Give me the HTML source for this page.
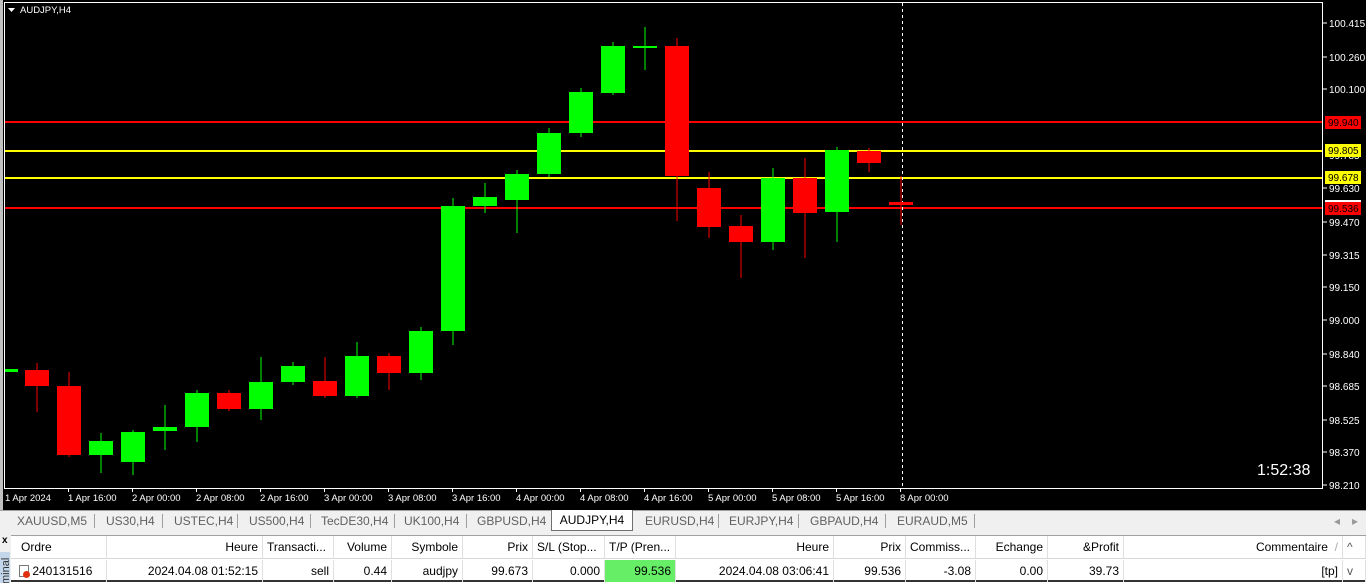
<!DOCTYPE html>
<html><head><meta charset="utf-8"><style>
*{margin:0;padding:0;box-sizing:border-box}
body{width:1366px;height:583px;overflow:hidden;background:#f0f0f0;font-family:"Liberation Sans",sans-serif;position:relative}
#chart{position:absolute;left:0;top:0}
.tabs{position:absolute;left:0;top:510px;width:1366px;height:21px;background:#f0f0f0;border-top:1px solid #a0a0a0;font-size:12px;color:#606060}
.tab{position:absolute;top:3px;}
.sep{position:absolute;top:3px;width:1px;height:14px;background:#a0a0a0}
.act{position:absolute;left:551px;top:-1px;width:82px;height:21px;background:#fff;border:1px solid #707070;border-top:none;color:#000;text-align:center;padding-top:3px}
.tbl{position:absolute;left:11px;top:535px;width:1355px;height:48px;background:#fff;border-top:1px solid #a0a0a0;font-size:12px}
.c{position:absolute;height:22px;line-height:22px;border-right:1px solid #e0e0e0;padding:0 4px;white-space:nowrap;overflow:hidden}
.r{text-align:right}
</style></head><body>
<svg id="chart" width="1366" height="510" xmlns="http://www.w3.org/2000/svg" font-family="Liberation Sans, sans-serif">
<rect x="0" y="0" width="1366" height="510" fill="#000"/>
<rect x="0" y="0" width="3" height="510" fill="#c0c0c0"/>
<rect x="4.5" y="2.5" width="1318" height="486" fill="none" stroke="#fff" stroke-width="1"/>
<polygon points="8,8 15,8 11.5,12" fill="#fff"/>
<text x="20" y="13" fill="#fff" font-size="9.5">AUDJPY,H4</text>
<g stroke-width="1">
<line x1="5" y1="122" x2="1322" y2="122" stroke="#f00" stroke-width="2"/>
<line x1="5" y1="151" x2="1322" y2="151" stroke="#ff0" stroke-width="2"/>
<line x1="5" y1="178" x2="1322" y2="178" stroke="#ff0" stroke-width="2"/>
<line x1="5" y1="208" x2="1322" y2="208" stroke="#f00" stroke-width="2"/>
</g>
<line x1="902.5" y1="3" x2="902.5" y2="488" stroke="#fff" stroke-dasharray="3,3"/>
<g stroke-width="1">
<line x1="37" y1="363" x2="37" y2="412" stroke="#f00"/><rect x="25" y="370" width="24" height="16" fill="#f00"/>
<line x1="69" y1="372" x2="69" y2="457" stroke="#f00"/><rect x="57" y="386" width="24" height="69" fill="#f00"/>
<line x1="101" y1="433" x2="101" y2="473" stroke="#0f0"/><rect x="89" y="441" width="24" height="14" fill="#0f0"/>
<line x1="133" y1="430" x2="133" y2="475" stroke="#0f0"/><rect x="121" y="432" width="24" height="30" fill="#0f0"/>
<line x1="165" y1="405" x2="165" y2="450" stroke="#0f0"/><rect x="153" y="427" width="24" height="4" fill="#0f0"/>
<line x1="197" y1="390" x2="197" y2="442" stroke="#0f0"/><rect x="185" y="393" width="24" height="34" fill="#0f0"/>
<line x1="229" y1="390" x2="229" y2="411" stroke="#f00"/><rect x="217" y="393" width="24" height="16" fill="#f00"/>
<line x1="261" y1="357" x2="261" y2="420" stroke="#0f0"/><rect x="249" y="382" width="24" height="27" fill="#0f0"/>
<line x1="293" y1="362" x2="293" y2="385" stroke="#0f0"/><rect x="281" y="366" width="24" height="16" fill="#0f0"/>
<line x1="325" y1="357" x2="325" y2="398" stroke="#f00"/><rect x="313" y="381" width="24" height="15" fill="#f00"/>
<line x1="357" y1="342" x2="357" y2="398" stroke="#0f0"/><rect x="345" y="356" width="24" height="40" fill="#0f0"/>
<line x1="389" y1="353" x2="389" y2="390" stroke="#f00"/><rect x="377" y="356" width="24" height="17" fill="#f00"/>
<line x1="421" y1="327" x2="421" y2="380" stroke="#0f0"/><rect x="409" y="331" width="24" height="42" fill="#0f0"/>
<line x1="453" y1="198" x2="453" y2="345" stroke="#0f0"/><rect x="441" y="206" width="24" height="125" fill="#0f0"/>
<line x1="485" y1="183" x2="485" y2="213" stroke="#0f0"/><rect x="473" y="197" width="24" height="9" fill="#0f0"/>
<line x1="517" y1="170" x2="517" y2="233" stroke="#0f0"/><rect x="505" y="174" width="24" height="26" fill="#0f0"/>
<line x1="549" y1="128" x2="549" y2="177" stroke="#0f0"/><rect x="537" y="133" width="24" height="41" fill="#0f0"/>
<line x1="581" y1="88" x2="581" y2="137" stroke="#0f0"/><rect x="569" y="92" width="24" height="41" fill="#0f0"/>
<line x1="613" y1="42" x2="613" y2="95" stroke="#0f0"/><rect x="601" y="46" width="24" height="47" fill="#0f0"/>
<line x1="645" y1="27" x2="645" y2="70" stroke="#0f0"/><rect x="633" y="46" width="24" height="2" fill="#0f0"/>
<line x1="677" y1="38" x2="677" y2="221" stroke="#f00"/><rect x="665" y="46" width="24" height="130" fill="#f00"/>
<line x1="709" y1="172" x2="709" y2="238" stroke="#f00"/><rect x="697" y="188" width="24" height="39" fill="#f00"/>
<line x1="741" y1="215" x2="741" y2="278" stroke="#f00"/><rect x="729" y="226" width="24" height="16" fill="#f00"/>
<line x1="773" y1="168" x2="773" y2="250" stroke="#0f0"/><rect x="761" y="178" width="24" height="64" fill="#0f0"/>
<line x1="805" y1="158" x2="805" y2="258" stroke="#f00"/><rect x="793" y="178" width="24" height="35" fill="#f00"/>
<line x1="837" y1="147" x2="837" y2="242" stroke="#0f0"/><rect x="825" y="150" width="24" height="62" fill="#0f0"/>
<line x1="869" y1="148" x2="869" y2="172" stroke="#f00"/><rect x="857" y="151" width="24" height="12" fill="#f00"/>
<line x1="901" y1="176" x2="901" y2="225" stroke="#f00"/><rect x="889" y="202" width="24" height="3" fill="#f00"/>
<rect x="5" y="369" width="13" height="3" fill="#0f0"/>
</g>
<g fill="#fff" font-size="10" stroke="#fff">
<line x1="1323" y1="23" x2="1327" y2="23"/><text x="1329" y="27" stroke="none">100.415</text>
<line x1="1323" y1="57" x2="1327" y2="57"/><text x="1329" y="61" stroke="none">100.260</text>
<line x1="1323" y1="89" x2="1327" y2="89"/><text x="1329" y="93" stroke="none">100.100</text>
<text x="1329" y="159" stroke="none">99.785</text>
<line x1="1323" y1="188" x2="1327" y2="188"/><text x="1329" y="192" stroke="none">99.630</text>
<line x1="1323" y1="222" x2="1327" y2="222"/><text x="1329" y="226" stroke="none">99.470</text>
<line x1="1323" y1="255" x2="1327" y2="255"/><text x="1329" y="259" stroke="none">99.315</text>
<line x1="1323" y1="287" x2="1327" y2="287"/><text x="1329" y="291" stroke="none">99.150</text>
<line x1="1323" y1="320" x2="1327" y2="320"/><text x="1329" y="324" stroke="none">99.000</text>
<line x1="1323" y1="354" x2="1327" y2="354"/><text x="1329" y="358" stroke="none">98.840</text>
<line x1="1323" y1="386" x2="1327" y2="386"/><text x="1329" y="390" stroke="none">98.685</text>
<line x1="1323" y1="420" x2="1327" y2="420"/><text x="1329" y="424" stroke="none">98.525</text>
<line x1="1323" y1="452" x2="1327" y2="452"/><text x="1329" y="456" stroke="none">98.370</text>
<line x1="1323" y1="485" x2="1327" y2="485"/><text x="1329" y="489" stroke="none">98.210</text>
</g>
<rect x="1325" y="116" width="36" height="13" fill="#f00"/><text x="1328" y="126" font-size="10" fill="#000">99.940</text>
<rect x="1325" y="144" width="36" height="13" fill="#ff0"/><text x="1328" y="154" font-size="10" fill="#000">99.805</text>
<rect x="1325" y="171" width="36" height="13" fill="#ff0"/><text x="1328" y="181" font-size="10" fill="#000">99.678</text>
<rect x="1325" y="200" width="36" height="2" fill="#fff"/>
<rect x="1325" y="202" width="36" height="13" fill="#f00"/><text x="1328" y="212" font-size="10" fill="#000">99.536</text>
<g fill="#fff" font-size="9.5">
<text x="5" y="501">1 Apr 2024</text><text x="68" y="501">1 Apr 16:00</text><text x="132" y="501">2 Apr 00:00</text><text x="196" y="501">2 Apr 08:00</text><text x="260" y="501">2 Apr 16:00</text><text x="324" y="501">3 Apr 00:00</text><text x="388" y="501">3 Apr 08:00</text><text x="452" y="501">3 Apr 16:00</text><text x="516" y="501">4 Apr 00:00</text><text x="580" y="501">4 Apr 08:00</text><text x="644" y="501">4 Apr 16:00</text><text x="708" y="501">5 Apr 00:00</text><text x="772" y="501">5 Apr 08:00</text><text x="836" y="501">5 Apr 16:00</text><text x="900" y="501">8 Apr 00:00</text>
</g>
<g stroke="#fff"><line x1="68.5" y1="488" x2="68.5" y2="492"/><line x1="132.5" y1="488" x2="132.5" y2="492"/><line x1="196.5" y1="488" x2="196.5" y2="492"/><line x1="260.5" y1="488" x2="260.5" y2="492"/><line x1="324.5" y1="488" x2="324.5" y2="492"/><line x1="388.5" y1="488" x2="388.5" y2="492"/><line x1="452.5" y1="488" x2="452.5" y2="492"/><line x1="516.5" y1="488" x2="516.5" y2="492"/><line x1="580.5" y1="488" x2="580.5" y2="492"/><line x1="644.5" y1="488" x2="644.5" y2="492"/><line x1="708.5" y1="488" x2="708.5" y2="492"/><line x1="772.5" y1="488" x2="772.5" y2="492"/><line x1="836.5" y1="488" x2="836.5" y2="492"/><line x1="900.5" y1="488" x2="900.5" y2="492"/></g>
<text x="1257" y="475" fill="#fff" font-size="16">1:52:38</text>
</svg>
<div class="tabs">
<span class="tab" style="left:17px">XAUUSD,M5</span><div class="sep" style="left:94px"></div>
<span class="tab" style="left:106px">US30,H4</span><div class="sep" style="left:162px"></div>
<span class="tab" style="left:174px">USTEC,H4</span><div class="sep" style="left:237px"></div>
<span class="tab" style="left:249px">US500,H4</span><div class="sep" style="left:310px"></div>
<span class="tab" style="left:321px">TecDE30,H4</span><div class="sep" style="left:394px"></div>
<span class="tab" style="left:404px">UK100,H4</span><div class="sep" style="left:466px"></div>
<span class="tab" style="left:477px">GBPUSD,H4</span>
<div class="act">AUDJPY,H4</div>
<span class="tab" style="left:645px">EURUSD,H4</span><div class="sep" style="left:718px"></div>
<span class="tab" style="left:729px">EURJPY,H4</span><div class="sep" style="left:798px"></div>
<span class="tab" style="left:810px">GBPAUD,H4</span><div class="sep" style="left:885px"></div>
<span class="tab" style="left:897px">EURAUD,M5</span><div class="sep" style="left:974px"></div>
<span class="tab" style="left:1334px;color:#999">&#9666;</span><span class="tab" style="left:1352px;color:#999">&#9656;</span>
</div>
<div style="position:absolute;left:0;top:531px;width:1366px;height:4px;background:#f0f0f0"></div>
<div style="position:absolute;left:0;top:535px;width:11px;height:48px;background:#f0f0f0;font-size:10px;font-weight:bold;padding-left:2px">x</div>
<div style="position:absolute;left:0;top:552px;width:10px;height:31px;background:#c4d6ea;overflow:hidden"><div style="transform:rotate(-90deg);transform-origin:0 0;position:absolute;left:0;top:32px;font-size:11px;color:#333">minal</div></div>
<div class="tbl">
<div style="position:absolute;left:0;top:0;width:1355px;height:23px;border-bottom:1px solid #d8d8d8"></div>
<div class="c" style="left:0;width:96px;padding-left:10px">Ordre</div>
<div class="c r" style="left:96px;width:156px">Heure</div>
<div class="c" style="left:252px;width:71px">Transacti...</div>
<div class="c r" style="left:323px;width:58px">Volume</div>
<div class="c r" style="left:381px;width:71px">Symbole</div>
<div class="c r" style="left:452px;width:70px">Prix</div>
<div class="c" style="left:522px;width:72px">S/L (Stop...</div>
<div class="c" style="left:594px;width:71px">T/P (Pren...</div>
<div class="c r" style="left:665px;width:158px">Heure</div>
<div class="c r" style="left:823px;width:72px">Prix</div>
<div class="c" style="left:895px;width:70px">Commiss...</div>
<div class="c r" style="left:965px;width:72px">Echange</div>
<div class="c r" style="left:1037px;width:76px">&amp;Profit</div>
<div class="c r" style="left:1113px;width:219px">Commentaire &nbsp;<span style="color:#aaa">/</span></div>
<div class="c" style="left:1332px;width:23px;color:#555">^</div>
<div style="position:absolute;top:24px;left:0;width:1355px;height:22px;border-bottom:2px solid #333">
<div class="c" style="left:0;width:96px;padding-left:8px"><span style="display:inline-block;width:10px;height:12px;border:1px solid #777;vertical-align:-2px;position:relative"><span style="position:absolute;left:3px;top:5px;width:7px;height:7px;border-radius:50%;background:#e03010"></span></span> 240131516</div>
<div class="c r" style="left:96px;width:156px">2024.04.08 01:52:15</div>
<div class="c r" style="left:252px;width:71px">sell</div>
<div class="c r" style="left:323px;width:58px">0.44</div>
<div class="c r" style="left:381px;width:71px">audjpy</div>
<div class="c r" style="left:452px;width:70px">99.673</div>
<div class="c r" style="left:522px;width:72px">0.000</div>
<div class="c r" style="left:594px;width:71px;background:#66ee66">99.536</div>
<div class="c r" style="left:665px;width:158px">2024.04.08 03:06:41</div>
<div class="c r" style="left:823px;width:72px">99.536</div>
<div class="c r" style="left:895px;width:70px">-3.08</div>
<div class="c r" style="left:965px;width:72px">0.00</div>
<div class="c r" style="left:1037px;width:76px">39.73</div>
<div class="c r" style="left:1113px;width:219px">[tp]</div>
<div class="c" style="left:1332px;width:23px;color:#555">v</div>
</div>
</div>
</body></html>
